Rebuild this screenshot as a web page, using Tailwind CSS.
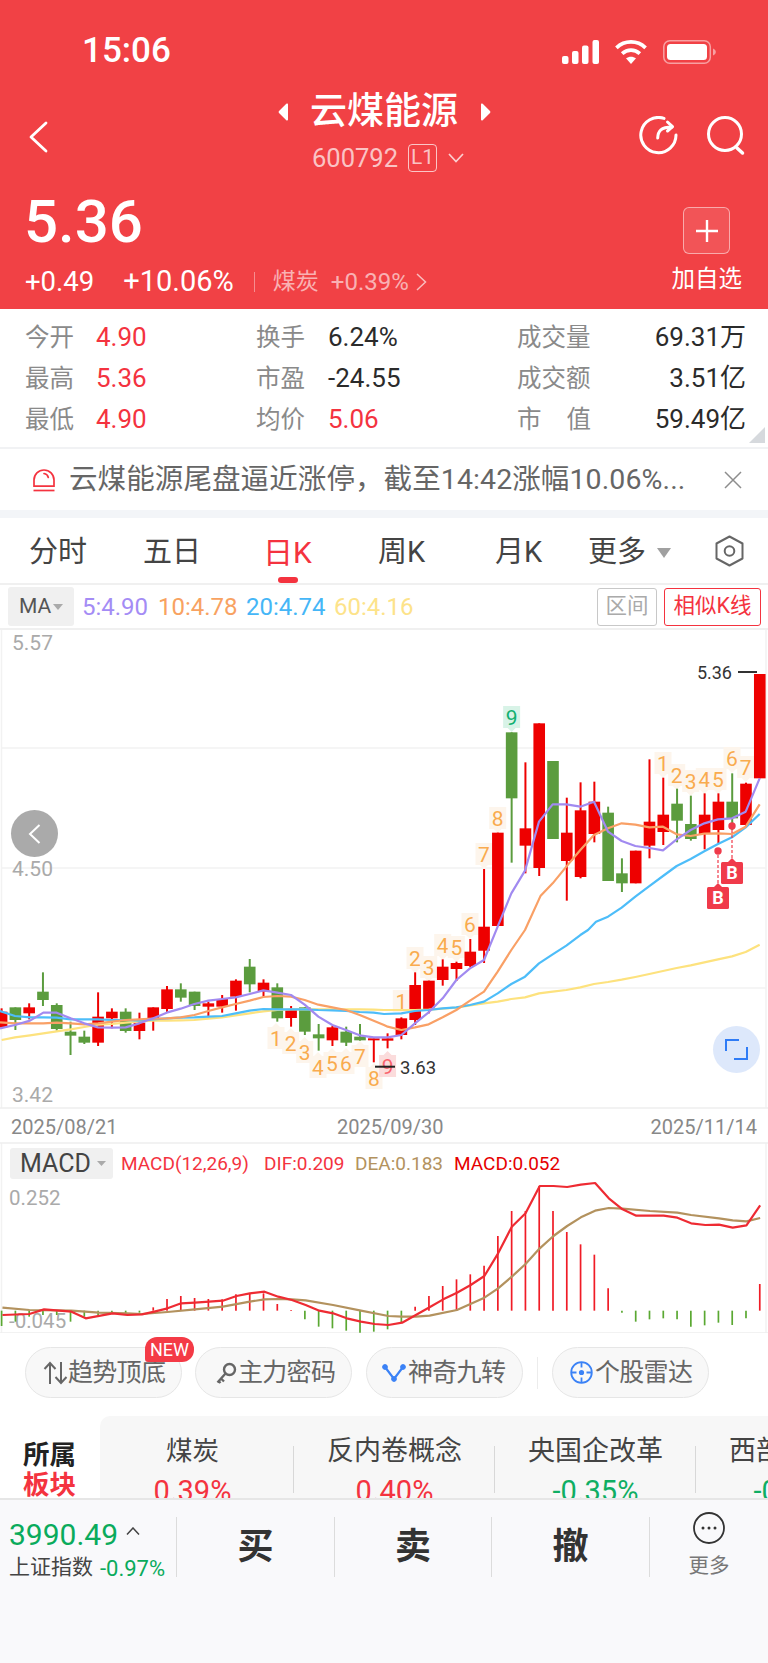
<!DOCTYPE html>
<html lang="zh-CN">
<head>
<meta charset="UTF-8">
<title>云煤能源</title>
<script src="https://cdn.jsdelivr.net/npm/@tailwindcss/browser@4"></script>
</head>
<body class="bg-white">
<div class="w-[768px] h-[1663px] overflow-hidden font-['Roboto','Noto_Sans_CJK_SC',sans-serif]">

  <!-- Header -->
  <div class="h-[309px] bg-[#f14145] text-white">
    <div class="h-[90px] pt-[12px] flex items-start">
      <div class="h-[78px] ml-[82px] text-[35px] font-medium leading-[78px]">15:06</div>
      <div class="ml-auto mr-[52px] mt-[27px] flex items-center">
        <svg class="w-[37px] h-[24px]" viewBox="0 0 37 24" fill="#fff"><rect x="0" y="16" width="6.5" height="8" rx="2"/><rect x="10" y="11" width="6.5" height="13" rx="2"/><rect x="20" y="5.500" width="6.500" height="18.500" rx="2"/><rect x="30.500" y="0" width="6.500" height="24" rx="2"/></svg>
        <svg class="w-[34px] h-[25px] ml-[15px]" viewBox="0 0 32 24" fill="none" stroke="#fff" stroke-width="3.600"><path d="M2 8.500C10 1 22 1 30 8.500"/><path d="M7.500 14C12.500 9.500 19.500 9.500 24.500 14"/><path d="M16 24l-4.800-5.500c2.800-2 6.800-2 9.600 0z" fill="#fff" stroke="none"/></svg>
        <svg class="w-[53px] h-[24px] ml-[15px]" viewBox="0 0 53 24" fill="none"><rect x="0.800" y="0.800" width="46.500" height="22.400" rx="6" stroke="#fff" stroke-opacity="0.500" stroke-width="1.500"/><rect x="4" y="4" width="40" height="16" rx="3.500" fill="#fff"/><path d="M50 8.500c2 .7 2.800 2 2.800 3.500s-.8 2.800-2.800 3.500z" fill="#fff" fill-opacity="0.500"/></svg>
      </div>
    </div>

    <div class="h-[85px] flex items-start">
      <svg class="w-[20px] h-[32px] ml-[28px] mt-[31px]" viewBox="0 0 20 32" fill="none" stroke="#fff" stroke-width="2.800" stroke-linecap="round" stroke-linejoin="round"><path d="M18 2L3 16l15 14"/></svg>
      <div class="ml-[230px] w-[213px]">
        <div class="h-[44px] flex items-center">
          <svg class="w-[12px] h-[18px]" viewBox="0 0 12 18" fill="#fff"><path d="M10 1.500v15a1 1 0 0 1-1.700.7L1 10a1.500 1.500 0 0 1 0-2l7.300-7.200A1 1 0 0 1 10 1.500z"/></svg>
          <span class="ml-[20px] text-[37px] leading-[44px] font-medium">云煤能源</span>
          <svg class="ml-[21px] w-[12px] h-[18px]" viewBox="0 0 12 18" fill="#fff"><path d="M2 1.500v15a1 1 0 0 0 1.700.7L11 10a1.500 1.500 0 0 0 0-2L3.700.8A1 1 0 0 0 2 1.500z"/></svg>
        </div>
        <div class="mt-[5px] h-[38px] ml-[34px] flex items-center text-white/70">
          <span class="text-[25.500px]">600792</span>
          <span class="ml-[10px] w-[29px] h-[28px] rounded-[4px] border border-white/70 flex items-center justify-center text-[21px]">L1</span>
          <svg class="ml-[11px] w-[16px] h-[10px]" viewBox="0 0 16 10" fill="none" stroke="#fff" stroke-opacity="0.750" stroke-width="1.700"><path d="M1 1l7 7.500L15 1"/></svg>
        </div>
      </div>
      <svg class="ml-[148px] mt-[26px] w-[40px] h-[40px]" viewBox="0 0 40 40" fill="none" stroke="#fff" stroke-width="3" stroke-linecap="round" stroke-linejoin="round"><path d="M37 19A17.600 17.600 0 1 1 25 2.400"/><path d="M18.700 22C19 15 22 11 33 11"/><path d="M28.500 6L33.500 10.700L28.500 15"/></svg>
      <svg class="ml-[27px] mt-[26px] w-[40px] h-[40px]" viewBox="0 0 40 40" fill="none" stroke="#fff" stroke-width="3" stroke-linecap="round"><circle cx="19" cy="18" r="16.500"/><path d="M31 32l5.500 5" stroke-width="3.500"/></svg>
    </div>

    <div class="h-[134px] flex justify-between pl-[26px] pr-[26px]">
      <div>
        <div class="mt-[17px] h-[60px] -ml-[2px] text-[60px] leading-[60px] font-medium">5.36</div>
        <div class="mt-[15px] h-[30px] flex items-center -ml-[1px]">
          <span class="text-[27.500px]">+0.49</span>
          <span class="ml-[29px] text-[29px]">+10.06%</span>
          <span class="ml-[20px] w-[1px] h-[20px] bg-white/40"></span>
          <span class="ml-[18px] text-[23px] text-white/60">煤炭</span>
          <span class="ml-[12px] text-[24px] text-white/60">+0.39%</span>
          <svg class="ml-[7px] w-[11px] h-[18px]" viewBox="0 0 11 18" fill="none" stroke="#fff" stroke-opacity="0.650" stroke-width="1.500"><path d="M1 1l8.500 8L1 17"/></svg>
        </div>
      </div>
      <div class="flex flex-col items-center">
        <div class="mt-[32px] w-[47px] h-[47px] rounded-[6px] border border-white/50 bg-white/10 flex items-center justify-center">
          <svg class="w-[24px] h-[24px]" viewBox="0 0 24 24" stroke="#fff" stroke-width="2.400"><path d="M12 1v22M1 12h22"/></svg>
        </div>
        <div class="mt-[13px] text-[23.500px] leading-[24px] whitespace-nowrap">加自选</div>
      </div>
    </div>
  </div>

  <!-- Quote stats -->
  <div class="relative h-[138px] pt-[8px] pl-[25px] pr-[22px] text-[26px] leading-[41px] text-[#2b2b2b]">
    <div class="grid grid-cols-[71px_160px_72px_189px_76px_1fr] grid-rows-[41px_41px_41px]">
      <span class="text-[#8a8a8a] text-[24.500px]">今开</span><span class="text-[#f4333f]">4.90</span>
      <span class="text-[#8a8a8a] text-[24.500px]">换手</span><span>6.24%</span>
      <span class="text-[#8a8a8a] text-[24.500px]">成交量</span><span class="text-right whitespace-nowrap">69.31万</span>

      <span class="text-[#8a8a8a] text-[24.500px]">最高</span><span class="text-[#f4333f]">5.36</span>
      <span class="text-[#8a8a8a] text-[24.500px]">市盈</span><span>-24.55</span>
      <span class="text-[#8a8a8a] text-[24.500px]">成交额</span><span class="text-right whitespace-nowrap">3.51亿</span>

      <span class="text-[#8a8a8a] text-[24.500px]">最低</span><span class="text-[#f4333f]">4.90</span>
      <span class="text-[#8a8a8a] text-[24.500px]">均价</span><span class="text-[#f4333f]">5.06</span>
      <span class="text-[#8a8a8a] text-[24.500px] flex justify-between w-[74px]"><span>市</span><span>值</span></span><span class="text-right whitespace-nowrap">59.49亿</span>
    </div>
    <svg class="absolute right-[3px] bottom-[4px] w-[16px] h-[16px]" viewBox="0 0 16 16"><path d="M16 0v16H0z" fill="#d6d9dd"/></svg>
  </div>

  <!-- News alert -->
  <div class="h-[63px] border-t-2 border-[#f1f2f4] flex items-center text-[#666]">
    <svg class="ml-[32px] w-[24px] h-[24px]" viewBox="0 0 24 24" fill="none" stroke="#f4333f" stroke-width="1.700"><path d="M2 18.200V12a10 10 0 0 1 20 0v6.200z"/><path d="M1.500 22.500h21"/><path d="M12 5.500c2.300.3 3.800 1.700 4.300 4" stroke-linecap="round"/></svg>
    <span class="ml-[13px] text-[28.500px] leading-[40px] tracking-[0.100px] whitespace-nowrap w-[621px]">云煤能源尾盘逼近涨停，截至14:42涨幅10.06%...</span>
    <svg class="ml-[34px] w-[18px] h-[18px]" viewBox="0 0 18 18" stroke="#8d8d8d" stroke-width="1.500"><path d="M1 1l16 16M17 1L1 17"/></svg>
  </div>
  <div class="h-[8px] bg-[#f3f5f8]"></div>

  <!-- Period tabs -->
  <div class="relative h-[65px] pt-[4px] pl-[29px] flex items-center text-[29px] text-[#444]">
    <span class="w-[114px]">分时</span>
    <span class="w-[120px]">五日</span>
    <span class="w-[115px] text-[#f4333f] text-[30px]">日K</span>
    <span class="w-[117px]">周K</span>
    <span class="w-[93px]">月K</span>
    <span>更多</span>
    <svg class="ml-[11px] w-[14px] h-[10px]" viewBox="0 0 14 10" fill="#a0a0a0"><path d="M0 0h14L7 10z"/></svg>
    <svg class="ml-[44px] -mt-[4px] w-[29px] h-[32px]" viewBox="0 0 29 32" fill="none" stroke="#666" stroke-width="2"><path d="M14.500 1.500L27.500 8.500V23.500L14.500 30.500L1.500 23.500V8.500z" stroke-linejoin="round"/><circle cx="14.500" cy="16" r="4.800"/></svg>
    <span class="absolute left-[278px] bottom-0 w-[20px] h-[6px] rounded-full bg-[#f4333f]"></span>
  </div>

  <!-- MA legend -->
  <div class="h-[47px] border-y-2 border-[#f0f0f0] pl-[8px] flex items-center text-[24px]">
    <div class="w-[66px] h-[39px] rounded-[3px] bg-[#f0f0f0] flex items-center pl-[11px] text-[21px] text-[#555]">MA<svg class="ml-[2px] w-[10px] h-[6px]" viewBox="0 0 10 6" fill="#aaa"><path d="M0 0h10L5 6z"/></svg></div>
    <span class="ml-[8px] w-[76px] text-[#a48cf5]">5:4.90</span>
    <span class="w-[88px] text-[#f8a261]">10:4.78</span>
    <span class="w-[88px] text-[#45b6f7]">20:4.74</span>
    <span class="text-[#fde38a]">60:4.16</span>
    <span class="ml-auto w-[60px] h-[38px] rounded-[3px] border border-[#c8c8c8] text-[#aaa] text-[21.500px] flex items-center justify-center">区间</span>
    <span class="ml-[7px] mr-[7px] w-[97px] h-[38px] rounded-[3px] border border-[#f4333f] text-[#f4333f] text-[21.500px] flex items-center justify-center">相似K线</span>
  </div>

  <!-- K chart + MACD pane (free canvas) -->
  <div class="relative h-[703px]">
    <svg id="chart" class="absolute inset-0" width="768" height="703" viewBox="0 630 768 703"></svg>

    <div class="absolute left-[10px] top-[518px] w-[103px] h-[31px] rounded-[3px] bg-[#f0f0f0] flex items-center pl-[10px] text-[25px] text-[#444]">MACD<svg class="ml-[6px] w-[9px] h-[5px]" viewBox="0 0 9 5" fill="#aaa"><path d="M0 0h9L4.500 5z"/></svg></div>
    <div class="absolute left-[121px] top-[521px] flex items-center h-[26px] text-[19px]">
      <span class="w-[143px] text-[#f4333f]">MACD(12,26,9)</span>
      <span class="w-[91px] text-[#f4333f]">DIF:0.209</span>
      <span class="w-[99px] text-[#b3925e]">DEA:0.183</span>
      <span class="text-[#e60000]">MACD:0.052</span>
    </div>

    <div class="absolute left-[11px] top-[180px] w-[47px] h-[47px] rounded-full bg-[#aaaaaa] flex items-center justify-center">
      <svg class="w-[13px] h-[20px]" viewBox="0 0 13 20" fill="none" stroke="#fff" stroke-width="2"><path d="M11.500 1L2 10l9.500 9"/></svg>
    </div>
    <div class="absolute left-[713px] top-[396px] w-[47px] h-[47px] rounded-full bg-[#dde8fb] flex items-center justify-center">
      <svg class="w-[23px] h-[21px]" viewBox="0 0 23 21" fill="none" stroke="#2f7cf6" stroke-width="2"><path d="M1 12V1h13"/><path d="M9 20h13V8"/></svg>
    </div>
  </div>

  <!-- Feature chips -->
  <div class="h-[83px] pt-[14px] pl-[25px] flex items-start text-[25px] text-[#666]">
    <div class="relative w-[157px] h-[51px] rounded-full border border-[#e6e6e6] bg-[#f8f8f8] flex items-center pl-[17px] whitespace-nowrap">
      <svg class="w-[25px] h-[24px]" viewBox="0 0 25 24" fill="none" stroke="#666" stroke-width="2"><path d="M7 23V2M1.500 8L7 2l5.500 6"/><path d="M18 1v21M12.500 16l5.500 6 5.500-6"/></svg>
      <span class="tracking-[-0.700px]">趋势顶底</span>
      <span class="absolute left-[119px] -top-[11px] w-[49px] h-[25px] rounded-t-[12px] rounded-br-[12px] rounded-bl-[3px] bg-[#f43a46] text-white text-[18px] leading-[25px] text-center">NEW</span>
    </div>
    <div class="ml-[13px] w-[157px] h-[51px] rounded-full border border-[#e6e6e6] bg-[#f8f8f8] flex items-center pl-[20px] whitespace-nowrap">
      <svg class="w-[21px] h-[22px] mr-[1px]" viewBox="0 0 21 22" fill="none" stroke="#666" stroke-width="2.400"><circle cx="13.500" cy="7.500" r="5.500"/><path d="M9.500 11.500L1.500 20.500M5 16.500l3 3M2.500 19l2 2"/></svg>
      <span class="tracking-[-0.700px]">主力密码</span>
    </div>
    <div class="ml-[14px] w-[157px] h-[51px] rounded-full border border-[#e6e6e6] bg-[#f8f8f8] flex items-center pl-[15px] whitespace-nowrap">
      <svg class="w-[24px] h-[20px] mr-[2px]" viewBox="0 0 24 20" fill="#3b82f6" stroke="#3b82f6"><path d="M3 4l9 12 9-12" fill="none" stroke-width="2.200"/><circle cx="3" cy="4" r="2.400"/><circle cx="12" cy="16" r="2.400"/><circle cx="21" cy="4" r="2.400"/></svg>
      <span class="tracking-[-0.700px]">神奇九转</span>
    </div>
    <span class="ml-[14px] mt-[10px] w-[1px] h-[32px] bg-[#ececec]"></span>
    <div class="ml-[14px] w-[157px] h-[51px] rounded-full border border-[#e6e6e6] bg-[#f8f8f8] flex items-center pl-[17px] whitespace-nowrap">
      <svg class="w-[23px] h-[23px] mr-[2px]" viewBox="0 0 23 23" fill="none" stroke="#3b82f6" stroke-width="1.800"><circle cx="11.500" cy="11.500" r="10.300"/><path d="M11.500 1v5.500M11.500 16.500V22M1 11.500h5.500M16.500 11.500H22"/><circle cx="11.500" cy="11.500" r="1.700" fill="#3b82f6"/></svg>
      <span class="tracking-[-0.700px]">个股雷达</span>
    </div>
  </div>

  <!-- Sector strip, cut off by the bottom bar -->
  <div class="h-[82px] flex overflow-hidden">
    <div class="w-[100px] pl-[23px] pt-[24px] text-[26.500px] leading-[30px] font-bold text-[#222]">所属<div class="text-[#f4333f]">板块</div></div>
    <div class="flex-1 h-[120px] rounded-tl-[10px] bg-[#f7f7f7] flex overflow-hidden">
      <div class="relative w-[194px] pr-[9px] pt-[17px] text-center shrink-0">
        <div class="text-[26.500px] leading-[36px] text-[#444]">煤炭</div><div class="mt-[5px] text-[29px] leading-[34px] text-[#f4333f]">0.39%</div>
        <span class="absolute right-0 top-[30px] w-[1px] h-[47px] bg-[#d8d8d8]"></span>
      </div>
      <div class="relative w-[201px] pt-[17px] text-center shrink-0">
        <div class="text-[27px] leading-[36px] text-[#444]">反内卷概念</div><div class="mt-[5px] text-[29px] leading-[34px] text-[#f4333f]">0.40%</div>
        <span class="absolute right-0 top-[30px] w-[1px] h-[47px] bg-[#d8d8d8]"></span>
      </div>
      <div class="relative w-[201px] pt-[17px] text-center shrink-0">
        <div class="text-[27px] leading-[36px] text-[#444]">央国企改革</div><div class="mt-[5px] text-[29px] leading-[34px] text-[#0fae63]">-0.35%</div>
        <span class="absolute right-0 top-[30px] w-[1px] h-[47px] bg-[#d8d8d8]"></span>
      </div>
      <div class="w-[201px] pt-[17px] text-center shrink-0">
        <div class="text-[27px] leading-[36px] text-[#444]">西部大开发</div><div class="mt-[5px] text-[29px] leading-[34px] text-[#0fae63]">-0.25%</div>
      </div>
    </div>
  </div>

  <!-- Bottom trade bar -->
  <div class="h-[165px] border-t-2 border-[#e6e6e6] bg-[#f9f9fb] flex items-start pt-[17px]">
    <div class="w-[177px] h-[60px] border-r border-[#dcdcdc] pl-[9px] whitespace-nowrap">
      <div class="h-[34px] flex items-center text-[30px] text-[#0aab5c]">3990.49<svg class="ml-[8px] -mt-[6px] w-[14px] h-[8px]" viewBox="0 0 14 8" fill="none" stroke="#444" stroke-width="1.500"><path d="M1 7.500L7 1l6 6.500"/></svg></div>
      <div class="mt-[4px] h-[26px] flex items-center text-[#444] text-[21px]">上证指数<span class="ml-[7px] text-[#0aab5c] text-[22px]">-0.97%</span></div>
    </div>
    <div class="w-[158px] h-[60px] border-r border-[#dcdcdc] flex items-center justify-center text-[36px] font-bold text-[#333]">买</div>
    <div class="w-[157px] h-[60px] border-r border-[#dcdcdc] flex items-center justify-center text-[36px] font-bold text-[#333]">卖</div>
    <div class="w-[158px] h-[60px] border-r border-[#dcdcdc] flex items-center justify-center text-[36px] font-bold text-[#333]">撤</div>
    <div class="flex-1 -mt-[5px] flex flex-col items-center">
      <svg class="w-[32px] h-[32px]" viewBox="0 0 32 32" fill="none"><circle cx="16" cy="16" r="15" stroke="#333" stroke-width="1.800"/><circle cx="10" cy="16" r="1.500" fill="#333"/><circle cx="16" cy="16" r="1.500" fill="#333"/><circle cx="22" cy="16" r="1.500" fill="#333"/></svg>
      <span class="mt-[9px] text-[20.500px] leading-[26px] text-[#777]">更多</span>
    </div>
  </div>
</div>

<script>
  const R = '#ee0000', G = '#5b9c3e';
  const xOf = i => 1.6 + i * 13.785;
  let out = '';

  // grid + frame
  for (const y of [748, 868, 988]) out += `<path d="M1 ${y}H766" stroke="#f2f2f2" stroke-width="1.500"/>`;
  out += `<path d="M1.500 630V1108M766 630V1108M1.500 1143V1333M766 1143V1333" stroke="#f2f2f2" stroke-width="1.500"/>`;
  out += `<path d="M0 1108H768M0 1143H768M0 1333H768" stroke="#eeeeee" stroke-width="1.500"/>`;

  // axis labels
  const label = (x, y, s, cls, anchor) => `<text x="${x}" y="${y}" class="${cls}" text-anchor="${anchor || 'start'}">${s}</text>`;
  out += label(12, 650, '5.57', 'text-[21px] fill-[#aaaaaa]');
  out += label(12, 876, '4.50', 'text-[21px] fill-[#aaaaaa]');
  out += label(12, 1102, '3.42', 'text-[21px] fill-[#aaaaaa]');
  out += label(11, 1134, '2025/08/21', 'text-[20px] fill-[#888888]');
  out += label(337, 1134, '2025/09/30', 'text-[20px] fill-[#888888]');
  out += label(757, 1134, '2025/11/14', 'text-[20px] fill-[#888888]', 'end');
  out += label(9, 1205, '0.252', 'text-[20.500px] fill-[#aaaaaa]');
  out += label(9, 1328, '-0.045', 'text-[20.500px] fill-[#aaaaaa]');

  // TD sequence tags: [digit, x, y, pointer up?]
  const td = [
    [1,276,1038,1],[2,290.7,1043,1],[3,304.7,1052,1],[4,318,1067,1],[5,332,1063,1],[6,346,1063,1],[7,360,1056,1],[8,374,1078,1],
    [1,401.3,1001,0],[2,415,958,0],[3,428.7,967,0],[4,442.7,945,0],[5,456.3,947,0],[6,470,924,0],[7,484,854,0],[8,497.7,818,0],
    [1,663,763,0],[2,676.7,775,0],[3,690.7,781,0],[4,704.3,779,0],[5,718,779,0],[6,732,758,0],[7,745.7,767,0]
  ];
  const tag = (n, x, y, up, bg, cls) => {
    const tip = up ? `${x-4},${y-11} ${x+4},${y-11} ${x},${y-15}` : `${x-4},${y+11} ${x+4},${y+11} ${x},${y+15}`;
    return `<rect x="${x-8.5}" y="${y-11}" width="17" height="22" fill="${bg}"/><polygon points="${tip}" fill="${bg}"/>` +
      `<text x="${x}" y="${y+7.500}" text-anchor="middle" class="${cls}">${n}</text>`;
  };
  for (const [n, x, y, up] of td) out += tag(n, x, y, up, '#fdf5ec', 'text-[21px] fill-[#f9ab4e]');
  out += tag(9, xOf(28), 1066, 1, '#fbdcdc', 'text-[21px] fill-[#f9646e]');
  out += tag(9, xOf(37), 717, 0, '#d8f3e7', 'text-[21px] fill-[#12b070]');

  // candles: [colour, wickTop, bodyTop, bodyBottom, wickBottom], read off the picture
  const upper = [
    [R,235,245,292,295],[G,232,232,270,300],[R,220,232,250,268],[G,127,185,210,228],[G,220,225,297,302],[G,275,305,317,375],[G,302,320,338,342],
    [R,187,260,338,348],[R,235,245,265,295],[G,235,245,303,308],[R,248,278,303,328],[R,232,232,270,302],[R,168,178,237,248],[G,160,178,203,215],
    [G,185,185,228,240],[R,215,220,230,262],[R,195,207,230,248],[R,148,152,200,242],[G,87,110,163,187],[R,148,158,185,200],[G,160,172,265,275],
    [R,228,238,264,290],[G,232,232,305,315],[G,282,313,325,362],[R,288,292,331,348],[G,290,305,338,348],[G,282,320,331,332],[R,325,325,331,397],
    [R,310,325,332,355],[R,262,265,315,328],[R,127,165,270,285],[R,152,152,240,250],[R,88,110,150,167],[R,95,99,117,153],[R,27,65,108,112]
  ];
  const lower = [
    [R,718,890,1,1],[R,608,608,888,888],[G,307,307,505,698],[R,397,595,647,730],[R,280,280,714,738],[G,393,393,627,627],[R,503,608,693,812],
    [R,457,541,741,745],[R,455,515,612,637],[G,530,548,753,753],[G,685,730,760,786],[R,662,662,760,760],[R,388,575,647,685],[R,443,554,606,645],
    [G,476,521,572,637],[G,497,582,627,632],[R,490,554,612,658],[R,490,515,600,640],[G,430,515,565,600],[R,458,461,585,587],[R,132,132,445,445]
  ];
  const candle = (i, c, wt, bt, bb, wb) => {
    const x = xOf(i);
    out += `<path d="M${x} ${wt}V${wb}" stroke="${c}" stroke-width="2"/><rect x="${x-5.8}" y="${bt}" width="11.600" height="${bb-bt}" fill="${c}"/>`;
  };
  upper.forEach((d, i) => candle(i, d[0], 930+d[1]/3, 930+d[2]/3, 930+d[3]/3, 930+d[4]/3));
  lower.forEach((d, k) => {
    const i = k + 35;
    if (k === 0) candle(i, d[0], 869, 926.7, 950.7, 963);
    else candle(i, d[0], 630+d[1]/3, 630+d[2]/3, 630+d[3]/3, 630+d[4]/3);
  });

  // moving averages, three stretches of [x,y] per line
  const z5 = a => a.map(([x,y]) => [x/3, 930+y/3]);
  const z6 = a => a.map(([x,y]) => [384+x/3, 930+y/3]);
  const z4 = a => a.map(([x,y]) => [384+x/3, 630+y/3]);
  const poly = (pts, c, w) => `<polyline points="${pts.map(p => p.join(',')).join(' ')}" fill="none" stroke="${c}" stroke-width="${w}" stroke-linejoin="round"/>`;

  out += poly([...z5([[5,330],[45,322],[90,316],[130,310],[170,304],[212,298],[253,291],[294,284],[336,282],[377,278],[418,274],[460,272],[500,272],[542,271],[583,270],[625,266],[666,262],[707,256],[749,250],[790,244],[832,240],[873,238],[914,238],[955,238],[997,238],[1038,238],[1079,238],[1121,239],[1152,240]]),
    ...z6([[0,240],[52,240],[93,240],[134,239],[176,236],[217,233],[258,226],[300,220],[341,215],[382,207],[423,202],[465,190],[506,185],[547,180],[589,172],[630,162],[672,156],[713,149],[754,141],[796,132],[837,123],[878,114],[920,106],[961,97],[1002,88],[1044,79],[1085,66],[1127,44]])], '#fde27e', 2.2);
  out += poly([...z5([[0,243],[45,258],[90,262],[130,262],[170,263],[212,268],[253,268],[294,268],[336,270],[377,270],[418,272],[460,268],[500,265],[542,263],[583,262],[625,260],[666,258],[707,250],[749,242],[790,237],[832,238],[873,238],[914,238],[955,240],[997,241],[1038,243],[1079,246],[1121,248],[1152,252]]),
    ...z6([[0,252],[52,250],[93,243],[134,240],[176,235],[217,232],[258,225],[300,215],[341,190],[382,162],[423,140],[465,100],[506,73],[547,47],[589,15],[612,0]]),
    ...z4([[636,875],[672,860],[713,833],[754,800],[796,768],[837,738],[878,708],[920,687],[961,664],[1002,642],[1044,622],[1085,592],[1127,552]])], '#4dbdf9', 2.2);
  out += poly([...z5([[0,277],[45,280],[90,280],[130,280],[170,278],[212,280],[253,283],[294,280],[336,275],[377,270],[418,268],[460,266],[500,265],[542,262],[583,255],[625,243],[666,232],[707,222],[749,212],[790,201],[832,198],[873,200],[914,210],[955,224],[997,232],[1038,240],[1079,255],[1121,272],[1152,285]]),
    ...z6([[11,290],[52,300],[93,292],[134,283],[176,262],[217,240],[258,212],[300,185],[341,125],[382,60],[423,0]]),
    ...z4([[470,797],[506,760],[547,710],[589,660],[630,615],[672,595],[713,580],[754,584],[796,592],[837,590],[878,613],[920,618],[961,611],[1002,610],[1044,612],[1085,590],[1127,523]])], '#f9a066', 2.2);
  out += poly([...z5([[0,295],[45,285],[90,272],[130,248],[170,248],[212,265],[253,280],[294,292],[336,293],[377,292],[418,280],[460,265],[500,248],[542,236],[583,222],[625,212],[666,207],[707,202],[749,192],[790,181],[832,188],[873,195],[914,224],[955,260],[997,285],[1038,300],[1079,316],[1121,322],[1152,322]]),
    ...z6([[11,322],[52,315],[93,280],[134,247],[176,205],[217,150],[258,115],[300,90]]),
    ...z4([[341,890],[382,790],[423,722],[465,575],[506,523],[547,523],[589,530],[630,515],[672,605],[713,633],[754,648],[796,654],[837,661],[878,628],[920,600],[961,580],[1002,568],[1044,565],[1085,545],[1127,445]])], '#a18af0', 2.2);

  // high / low markers
  out += `<path d="M738 672H757" stroke="#333" stroke-width="2"/>` + label(732, 679, '5.36', 'text-[18px] fill-[#333333]', 'end');
  out += `<path d="M375 1066.700H395" stroke="#222" stroke-width="2"/>` + label(400, 1074, '3.63', 'text-[18.500px] fill-[#333333]');

  // buy signals
  const buy = (x, dotY, boxY) => {
    out += `<circle cx="${x}" cy="${dotY}" r="3.700" fill="#f03a4a"/><path d="M${x} ${dotY+4}V${boxY}" stroke="#f03a4a" stroke-width="1.200" stroke-dasharray="3 2"/>`;
    out += `<rect x="${x-11}" y="${boxY}" width="22" height="22" rx="1.500" fill="#f03a4a"/><polygon points="${x-4},${boxY} ${x+4},${boxY} ${x},${boxY-4}" fill="#f03a4a"/>`;
    out += `<text x="${x}" y="${boxY+17}" text-anchor="middle" class="text-[18px] font-bold fill-white">B</text>`;
  };
  buy(718, 851, 887);
  buy(732, 826, 862);

  // MACD histogram: bar tip per day, axis at 512 in crop coordinates
  const tips = [558,545,530,525,525,545,530,525,522,520,518,502,477,468,474,477,478,463,460,460,492,510,538,560,565,572,578,575,568,548,
    500,468,438,418,403,377,288,213,213,138,213,276,313,344,445,518,545,538,535,538,560,556,548,555,535,432];
  const my = z => 1140 + z/3, mx = z => z/2.0417;
  tips.forEach((t, i) => {
    const x = xOf(i);
    out += `<path d="M${x} ${my(512)}V${my(t)}" stroke="${t > 512 ? '#5aa832' : '#f01c26'}" stroke-width="1.700"/>`;
  });
  const macd = a => a.map(([x,y]) => [mx(x), my(y)]);
  out += poly(macd([[5,503],[60,510],[146,512],[202,518],[260,520],[290,522],[342,516],[398,508],[455,500],[510,485],[540,478],[568,477],[596,478],[624,481],[680,495],[737,512],[793,528],[821,530],[849,530],[877,527],[933,510],[989,473],[1017,445],[1045,410],[1073,372],[1102,325],[1130,288],[1158,258],[1186,232],[1215,212],[1243,204],[1271,206],[1327,213],[1383,218],[1411,225],[1468,235],[1496,241],[1524,244],[1552,234]]), '#b3925e', 2.2);
  out += poly(macd([[5,525],[60,522],[90,508],[146,515],[175,535],[230,520],[260,525],[290,523],[315,515],[342,505],[370,490],[398,488],[427,485],[455,482],[483,468],[510,460],[540,455],[568,470],[596,480],[624,495],[652,512],[680,520],[708,535],[737,545],[765,552],[793,555],[821,548],[849,525],[877,502],[905,478],[933,458],[961,435],[989,408],[1017,340],[1045,260],[1073,220],[1102,138],[1130,138],[1158,141],[1186,134],[1215,129],[1243,175],[1271,208],[1299,227],[1327,227],[1355,227],[1383,233],[1411,250],[1440,255],[1468,254],[1496,263],[1524,256],[1552,196]]), '#ee2b33', 2.2);

  document.getElementById('chart').innerHTML = out;
</script>
</body>
</html>
